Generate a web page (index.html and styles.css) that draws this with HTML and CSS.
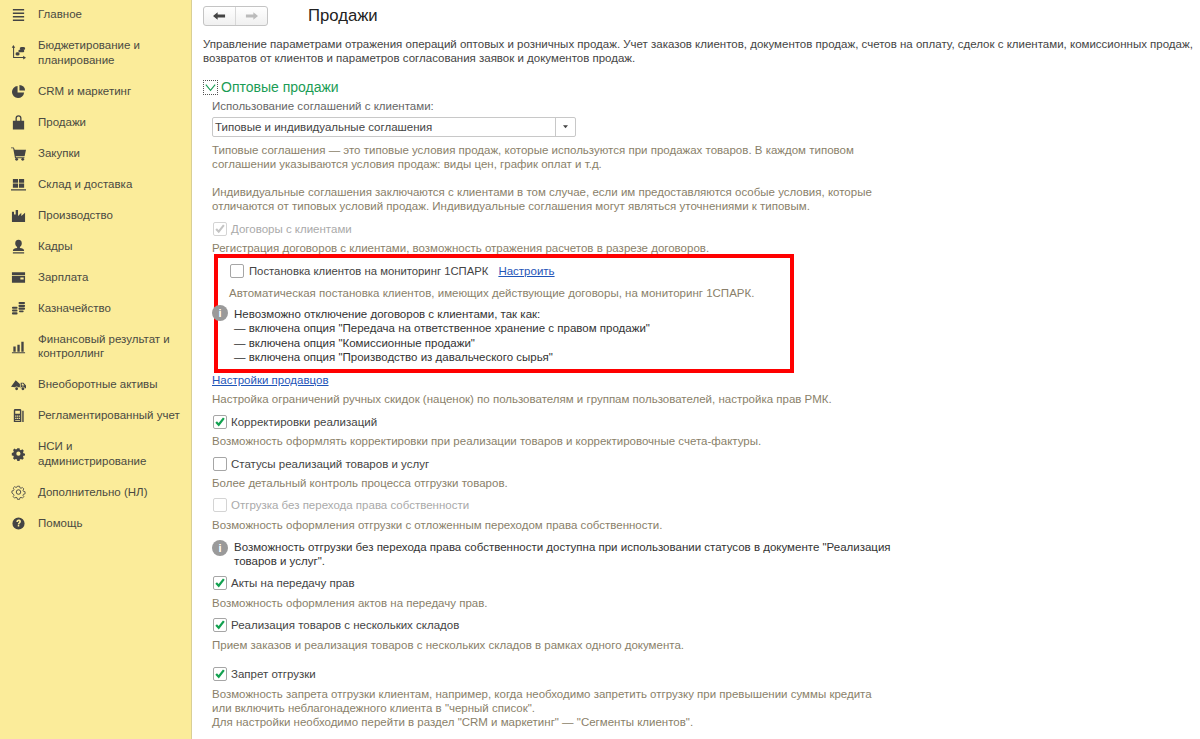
FILE: index.html
```html
<!DOCTYPE html>
<html lang="ru">
<head>
<meta charset="utf-8">
<title>Продажи</title>
<link rel="stylesheet" href="styles.css">
</head>
<body>
<aside class="sidebar">
  <nav class="menu">
    <a class="item"><svg class="ico" viewBox="0 0 16 16"><path d="M2 2h12v1.700H2zM2 5.800h12v1.700H2zM2 9.500h12v1.700H2zM2 13.200h12v1.700H2z"/></svg><span>Главное</span></a>
    <a class="item"><svg class="ico" viewBox="0 0 16 16"><path d="M2.500 0l2 3H3.300v9.700H13V11.500l3 2-3 2v-1.700H2.200V3H.8z"/><path d="M5 8.500c0-1 4-1 4 0v2c0 1-4 1-4 0zM9.500 3c0-1.300 5.500-1.300 5.500 0v1.500c0 .8-5.500.8-5.500 0zM8 5.500c0-.5 6-.5 6 0v1.700c0 .8-6 .8-6 0z"/></svg><span>Бюджетирование и<br>планирование</span></a>
    <a class="item"><svg class="ico" viewBox="0 0 16 16"><path d="M7 2a6.500 6.500 0 1 0 7 7H7z"/><path d="M9 1a6 6 0 0 1 6 6H9z"/></svg><span>CRM и маркетинг</span></a>
    <a class="item"><svg class="ico" viewBox="0 0 16 16"><path d="M2 6h2.800V3.500a3.200 3.200 0 0 1 6.400 0V6H14v9.500H2zM6.200 6h3.600V3.500a1.800 1.800 0 0 0-3.600 0z" fill-rule="evenodd"/></svg><span>Продажи</span></a>
    <a class="item"><svg class="ico" viewBox="0 0 16 16"><path d="M0 1.500h3l1 2.500h12l-1.500 7H5l.3 1h9v1H4.300L2.300 2.500H0z"/><circle cx="6" cy="14.200" r="1.500"/><circle cx="12.500" cy="14.200" r="1.500"/></svg><span>Закупки</span></a>
    <a class="item"><svg class="ico" viewBox="0 0 16 16"><path d="M2 2h5.500v4H2zM8.500 2H14v4H8.500zM2 7h5.500v4.500H2zM8.500 7H14v4.500H8.500zM0 13h16v1.500H0z"/></svg><span>Склад и доставка</span></a>
    <a class="item"><svg class="ico" viewBox="0 0 16 16"><path d="M1 15V4h2.200v3h1.800V2h2.500v6.500L11 5v3.500L15 5v10z"/></svg><span>Производство</span></a>
    <a class="item"><svg class="ico" viewBox="0 0 16 16"><path d="M8 .8a3.500 4 0 0 1 3.500 4c0 1.700-.8 3-2 3.600v1.300c2.500.3 4.500 1 4.500 3H2c0-2 2-2.700 4.500-3V8.400c-1.200-.6-2-1.900-2-3.600A3.500 4 0 0 1 8 .8zM2 14h12v1.500H2z"/></svg><span>Кадры</span></a>
    <a class="item"><svg class="ico" viewBox="0 0 16 16"><path d="M1 2.500h14v3H1zM1 6.500h14v7H1zM10 8v2h3.500V8z" fill-rule="evenodd"/></svg><span>Зарплата</span></a>
    <a class="item"><svg class="ico" viewBox="0 0 16 16"><g><rect x="8" y="1" width="7" height="2.300" rx="1.100"/><rect x="8" y="4" width="7" height="2.300" rx="1.100"/><rect x="8" y="7" width="7" height="2.300" rx="1.100"/><rect x="8.500" y="10" width="5" height="2" rx="1"/><rect x="1" y="6" width="6" height="2.300" rx="1.100"/><rect x="1" y="9" width="6" height="2.300" rx="1.100"/><rect x="1" y="12" width="6" height="2.300" rx="1.100"/></g></svg><span>Казначейство</span></a>
    <a class="item"><svg class="ico" viewBox="0 0 16 16"><path d="M2.500 8h2.500v5.500H2.500zM6.800 6h2.500v7.500H6.800zM11 3h2.500v10.500H11zM1 14h14v1.200H1z"/></svg><span>Финансовый результат и<br>контроллинг</span></a>
    <a class="item"><svg class="ico" viewBox="0 0 16 16"><path d="M0 10.500L5 3.500l4.500 4v3.500H7.800a2.200 2.200 0 0 0-3.600 0z"/><path d="M10.300 6h3l2.700 3v3h-1.200a2.200 2.200 0 0 0-4.300 0h-.2zM11.500 7v2h2.800L12.700 7z" fill-rule="evenodd"/><circle cx="6" cy="12.500" r="1.500"/><circle cx="12.700" cy="12.500" r="1.500"/></svg><span>Внеоборотные активы</span></a>
    <a class="item"><svg class="ico" viewBox="0 0 16 16"><path d="M3 2.500A1.500 1.500 0 0 1 4.500 1h5A1.500 1.500 0 0 1 11 2.500V15H3zM4.500 3v3h5V3zM4.500 8v1.300h1.300V8zM6.500 8v1.300h1.300V8zM8.500 8v1.300h1V8zM4.500 10.500v1.300h1.300v-1.300zM6.500 10.500v1.300h1.300v-1.300zM8.500 10.500v1.300h1v-1.300zM4.500 13v.9h5V13z" fill-rule="evenodd"/><path d="M12 3h1.500v12H12z"/></svg><span>Регламентированный учет</span></a>
    <a class="item"><svg class="ico" viewBox="0 0 16 16"><path d="M6.500 1h3l.4 2 1.500.7 1.800-1.100 2 2-1.100 1.800.7 1.500 2 .4v2.400l-2 .4-.7 1.500 1.100 1.800-2 2-1.800-1.100-1.500.7-.4 2h-3l-.4-2-1.500-.7-1.800 1.100-2-2 1.100-1.800-.7-1.500-2-.4V7.300l2-.4.7-1.500-1.100-1.800 2-2 1.800 1.100 1.500-.7zM8 5.500a2.800 2.800 0 1 0 0 5.600 2.800 2.800 0 0 0 0-5.600z" fill-rule="evenodd" transform="translate(1.500 1.500) scale(.8)"/></svg><span>НСИ и<br>администрирование</span></a>
    <a class="item"><svg class="ico ico-line" viewBox="0 0 16 16"><path d="M6.700 1.500h2.600l.4 1.900 1.400.6 1.600-1 1.800 1.800-1 1.600.6 1.400 1.900.4v2.600l-1.900.4-.6 1.400 1 1.600-1.800 1.800-1.600-1-1.400.6-.4 1.900H6.700l-.4-1.900-1.400-.6-1.600 1-1.800-1.800 1-1.600-.6-1.400L0 9.800V7.200l1.900-.4.600-1.400-1-1.600 1.800-1.800 1.600 1 1.400-.6z" transform="translate(1 0) scale(.875)"/><circle cx="8" cy="7.500" r="2.400"/></svg><span>Дополнительно (НЛ)</span></a>
    <a class="item"><svg class="ico" viewBox="0 0 16 16"><path d="M8 1.500a6.500 6.500 0 1 1 0 13 6.500 6.500 0 0 1 0-13zM5.700 6.300h1.800c0-.6.200-1 .6-1s.7.300.7.700c0 .9-1.600 1.100-1.600 3h1.600c0-1.300 1.800-1.400 1.800-3.200 0-1.300-1-2-2.500-2-1.600 0-2.400 1-2.400 2.500zM7.200 9.600v1.700h1.600V9.600z" fill-rule="evenodd"/></svg><span>Помощь</span></a>
  </nav>
</aside>
<main class="content">
  <header class="page-head">
    <div class="nav-btns">
      <span class="nav-btn"><svg viewBox="0 0 14 10" class="arrow"><path d="M0 5l5-4v2.500h8v3H5V9z"/></svg></span>
      <span class="nav-btn"><svg viewBox="0 0 14 10" class="arrow arrow-off"><path d="M14 5L9 1v2.500H1v3h8V9z"/></svg></span>
    </div>
    <h1 class="title">Продажи</h1>
  </header>
  <p class="intro">Управление параметрами отражения операций оптовых и розничных продаж. Учет заказов клиентов, документов продаж, счетов на оплату, сделок с клиентами, комиссионных продаж,<br>возвратов от клиентов и параметров согласования заявок и документов продаж.</p>
  <div class="section-head">
    <span class="toggle"><svg viewBox="0 0 14 14"><path d="M2 4l5 6 5-6" fill="none" stroke="#1a9c55" stroke-width="1.200"/></svg></span>
    <h2 class="section-title">Оптовые продажи</h2>
  </div>
  <div class="section-body">
    <div class="label">Использование соглашений с клиентами:</div>
    <div class="select"><span class="select-value">Типовые и индивидуальные соглашения</span><span class="select-btn"><svg viewBox="0 0 6 4"><path d="M0 0h6L3 3.500z"/></svg></span></div>
    <p class="hint hint-top">Типовые соглашения — это типовые условия продаж, которые используются при продажах товаров. В каждом типовом<br>соглашении указываются условия продаж: виды цен, график оплат и т.д.<br><br>Индивидуальные соглашения заключаются с клиентами в том случае, если им предоставляются особые условия, которые<br>отличаются от типовых условий продаж. Индивидуальные соглашения могут являться уточнениями к типовым.</p>
    <label class="check check-off"><span class="box box-off"><svg class="mark" viewBox="0 0 14 14"><path d="M2.500 7l3 3.200L11.500 2.500" fill="none" stroke="#c4c4c4" stroke-width="2.400"/></svg></span>Договоры с клиентами</label>
    <p class="hint">Регистрация договоров с клиентами, возможность отражения расчетов в разрезе договоров.</p>
    <section class="highlight">
      <div class="check-line"><span class="box"></span><span class="plain">Постановка клиентов на мониторинг 1СПАРК</span><a class="link">Настроить</a></div>
      <p class="hint hint-in">Автоматическая постановка клиентов, имеющих действующие договоры, на мониторинг 1СПАРК.</p>
      <div class="info info-box">
        <span class="info-ico info-ico-over">i</span>
        <p class="info-text">Невозможно отключение договоров с клиентами, так как:<br>— включена опция "Передача на ответственное хранение с правом продажи"<br>— включена опция "Комиссионные продажи"<br>— включена опция "Производство из давальческого сырья"</p>
      </div>
    </section>
    <a class="link link-block">Настройки продавцов</a>
    <p class="hint hint-wide">Настройка ограничений ручных скидок (наценок) по пользователям и группам пользователей, настройка прав РМК.</p>
    <label class="check"><span class="box"><svg class="mark" viewBox="0 0 14 14"><path d="M2.500 7l3 3.200L11.500 2.500" fill="none" stroke="#12a150" stroke-width="2.600"/></svg></span>Корректировки реализаций</label>
    <p class="hint">Возможность оформлять корректировки при реализации товаров и корректировочные счета-фактуры.</p>
    <label class="check"><span class="box"></span>Статусы реализаций товаров и услуг</label>
    <p class="hint">Более детальный контроль процесса отгрузки товаров.</p>
    <label class="check check-off check-tight"><span class="box box-off"></span>Отгрузка без перехода права собственности</label>
    <p class="hint hint-wide">Возможность оформления отгрузки с отложенным переходом права собственности.</p>
    <div class="info info-page">
      <span class="info-ico">i</span>
      <p class="info-text info-text-wide">Возможность отгрузки без перехода права собственности доступна при использовании статусов в документе "Реализация<br>товаров и услуг".</p>
    </div>
    <label class="check check-near"><span class="box"><svg class="mark" viewBox="0 0 14 14"><path d="M2.500 7l3 3.200L11.500 2.500" fill="none" stroke="#12a150" stroke-width="2.600"/></svg></span>Акты на передачу прав</label>
    <p class="hint hint-wide">Возможность оформления актов на передачу прав.</p>
    <label class="check check-tight"><span class="box"><svg class="mark" viewBox="0 0 14 14"><path d="M2.500 7l3 3.200L11.500 2.500" fill="none" stroke="#12a150" stroke-width="2.600"/></svg></span>Реализация товаров с нескольких складов</label>
    <p class="hint hint-wide">Прием заказов и реализация товаров с нескольких складов в рамках одного документа.</p>
    <label class="check check-far"><span class="box"><svg class="mark" viewBox="0 0 14 14"><path d="M2.500 7l3 3.200L11.500 2.500" fill="none" stroke="#12a150" stroke-width="2.600"/></svg></span>Запрет отгрузки</label>
    <p class="hint hint-wide">Возможность запрета отгрузки клиентам, например, когда необходимо запретить отгрузку при превышении суммы кредита<br>или включить неблагонадежного клиента в "черный список".<br>Для настройки необходимо перейти в раздел "CRM и маркетинг" — "Сегменты клиентов".</p>
  </div>
</main>
</body>
</html>
```
FILE: styles.css
```css
* { box-sizing: border-box; }
html, body { height: 100%; }
body {
  margin: 0;
  height: 739px;
  overflow: hidden;
  display: flex;
  background: #fff;
  font: 11.5px/14px "Liberation Sans", Arial, sans-serif;
  color: #333;
}
p, h1, h2 { margin: 0; font-weight: normal; }

.sidebar {
  flex: 0 0 192px;
  background: #fbec9a;
  border-right: 1px solid #d9cf95;
}
.menu { margin-top: -1px; }
.item {
  display: flex;
  align-items: center;
  min-height: 31px;
  padding: 8.200px 4px 8.200px 11px;
  line-height: 14.600px;
  color: #4a4a42;
}
.item span { margin-left: 12px; }
.ico { flex: none; width: 15px; height: 15px; margin: -2px 0; fill: #444; }
.ico-line { fill: none; stroke: #444; stroke-width: 1; }

.content { flex: 1; min-width: 0; padding-left: 11px; }
.page-head { display: flex; align-items: center; height: 26px; padding-top: 6px; }
.nav-btns {
  display: flex;
  width: 65px;
  height: 20px;
  border: 1px solid #c4c4c4;
  border-radius: 3px;
  background: linear-gradient(#fff, #f0f0f0);
}
.nav-btn { flex: 1; display: flex; align-items: center; justify-content: center; }
.nav-btn + .nav-btn { border-left: 1px solid #d8d8d8; }
.arrow { width: 13px; height: 10px; fill: #444; }
.arrow-off { fill: #bbb; }
.title { margin-left: 40px; font-size: 16.700px; line-height: 20px; color: #222; }
.intro { margin-top: 11px; white-space: nowrap; color: #444; }

.section-head { display: flex; align-items: center; height: 16px; margin-top: 14px; }
.toggle { width: 15px; height: 15px; border: 1px dotted #555; }
.toggle svg { display: block; width: 13px; height: 13px; }
.section-title { margin-left: 3px; font-size: 14px; line-height: 16px; color: #1a9c55; }

.section-body { padding-left: 9px; }
.label { margin-top: 4px; color: #666; }
.select {
  display: flex;
  width: 364px;
  height: 20px;
  margin-top: 4px;
  border: 1px solid #c8c8c8;
  border-radius: 2px;
  line-height: 18px;
}
.select-value { flex: 1; padding-left: 2px; color: #444; }
.select-btn {
  width: 20px;
  border-left: 1px solid #c8c8c8;
  display: flex;
  align-items: center;
  justify-content: center;
}
.select-btn svg { width: 5px; height: 4px; fill: #444; }

.hint { margin-top: 4px; color: #8a7f6a; }
.hint-top { margin-top: 6px; }
.hint-in { margin-top: 7px; }
.hint-wide { margin-top: 5px; }

.check { display: flex; align-items: center; height: 16px; margin-top: 8px; color: #444; }
.check-tight { margin-top: 7px; }
.check-near { margin-top: 6px; }
.check-far { margin-top: 14px; }
.check-off { color: #aaa; }
.box {
  flex: none;
  width: 14px;
  height: 14px;
  margin: 0 4px 0 1px;
  border: 1px solid #a6a6a6;
  border-radius: 2px;
  background: #fff;
}
.mark { display: block; width: 12px; height: 12px; }
.box-off { border-color: #d4d4d4; }

.highlight {
  width: 580px;
  height: 119px;
  margin: -1px 0 0 2px;
  padding: 5px 0 0 11px;
  border: 4px solid #f00;
  position: relative;
}
.check-line { display: flex; align-items: center; height: 16px; color: #444; }
.check-line .box { margin-right: 5px; }
.plain { margin-right: 10px; font-size: 11.300px; }
.link { color: #1f55b8; text-decoration: underline; }
.link-block { display: block; }

.info { display: flex; }
.info-box { margin-top: 7px; padding-left: 5px; }
.info-page { margin-top: 8px; }
.info-ico {
  flex: none;
  width: 16px;
  height: 16px;
  border-radius: 50%;
  background: #9a9a9a;
  color: #fff;
  font: bold 11px/16px "Liberation Sans", sans-serif;
  text-align: center;
}
.info-ico-over { position: absolute; left: -6px; top: 47px; }
.info-text { line-height: 14.400px; color: #333; }
.info-text-wide { margin-left: 6px; }
```
